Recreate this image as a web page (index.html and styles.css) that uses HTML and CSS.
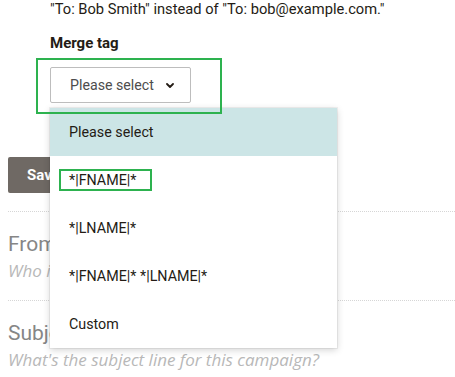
FILE: index.html
```html
<!DOCTYPE html>
<html lang="en">
<head>
<meta charset="utf-8">
<title>Merge tag</title>
<link rel="stylesheet" href="styles.css">
</head>
<body>
<div class="page">
  <div class="field">
    <p class="hint">"To: Bob Smith" instead of "To: bob@example.com."</p>
    <div class="label">Merge tag</div>
    <div class="annot-box">
      <button class="select" type="button">
        <span>Please select</span>
        <svg class="chev" width="8" height="5" viewBox="0 0 8 5" aria-hidden="true"><path d="M1 1 L4 4 L7 1" fill="none" stroke="#241c15" stroke-width="1.8" stroke-linecap="round" stroke-linejoin="round"/></svg>
      </button>
      <ul class="menu">
        <li class="opt active">Please select</li>
        <li class="opt"><span class="annot-tag">*|FNAME|*</span></li>
        <li class="opt">*|LNAME|*</li>
        <li class="opt">*|FNAME|* *|LNAME|*</li>
        <li class="opt">Custom</li>
      </ul>
    </div>
  </div>
  <button class="save" type="button">Save</button>
  <div class="section">
    <div class="sec-title">From</div>
    <div class="sec-sub">Who is sending this campaign?</div>
  </div>
  <div class="section">
    <div class="sec-title">Subject</div>
    <div class="sec-sub">What's the subject line for this campaign?</div>
  </div>
</div>
</body>
</html>
```

FILE: styles.css
```css
* { box-sizing: border-box; }
html, body { margin: 0; padding: 0; background: #fff; }
body {
  font-family: Roboto, "Liberation Sans", Arial, sans-serif;
  color: #241c15;
  overflow: hidden;
}
.page { width: 455px; height: 377px; padding-left: 8px; overflow: hidden; }
.field { padding-left: 42px; }
.hint {
  margin: 0;
  font-size: 14.7px;
  line-height: 20px;
  margin-top: -1px;
}
.label {
  margin-top: 14px;
  font-size: 15px;
  font-weight: 700;
  line-height: 20px;
}
.annot-box {
  position: relative;
  margin-top: 5px;
  margin-left: -14px;
  width: 186px;
  height: 56px;
  padding: 9px 0 0 14px;
}
.annot-box::after {
  content: "";
  position: absolute;
  inset: 0;
  border: 2px solid #2db24f;
  z-index: 3;
  pointer-events: none;
}
.select {
  display: flex;
  align-items: center;
  gap: 12px;
  height: 36px;
  width: 141px;
  padding: 0 0 0 19px;
  border: 1px solid #bdbdbd;
  border-radius: 2px;
  background: #fff;
  font: inherit;
  font-size: 14.2px;
  color: #4d4d4d;
}
.chev { display: block; margin-top: 1px; }
.menu {
  position: absolute;
  left: 14px;
  top: 50px;
  z-index: 2;
  width: 287px;
  margin: 0;
  padding: 0;
  list-style: none;
  background: #fff;
  box-shadow: 0 0 0 1px rgba(0,0,0,0.05), 0 2px 7px rgba(0,0,0,0.18);
}
.opt {
  height: 48px;
  display: flex;
  align-items: center;
  padding-left: 19px;
  font-size: 14.3px;
  color: #241c15;
}
.opt.active { background: #cce5e6; }
.annot-tag {
  display: inline-block;
  width: 93px;
  margin-left: -10px;
  padding: 0 0 0 8px;
  border: 2px solid #2db24f;
  line-height: 18px;
}
.save {
  display: block;
  margin-top: 43px;
  height: 36px;
  padding: 0 19px;
  border: 0;
  border-radius: 2px;
  background: #6f6964;
  color: #fff;
  font: inherit;
  font-size: 15px;
  font-weight: 700;
}
.section {
  margin-top: 18px;
  border-top: 1px dotted #d6d6d6;
  padding: 19px 0 17px;
}
.section + .section { margin-top: 0; }
.sec-title {
  font-size: 21px;
  line-height: 26px;
  color: #868686;
}
.sec-sub {
  font-family: "Open Sans", Roboto, Arial, sans-serif;
  font-size: 17px;
  line-height: 24px;
  margin-top: 2px;
  font-style: italic;
  color: #b8b8b8;
}
```
